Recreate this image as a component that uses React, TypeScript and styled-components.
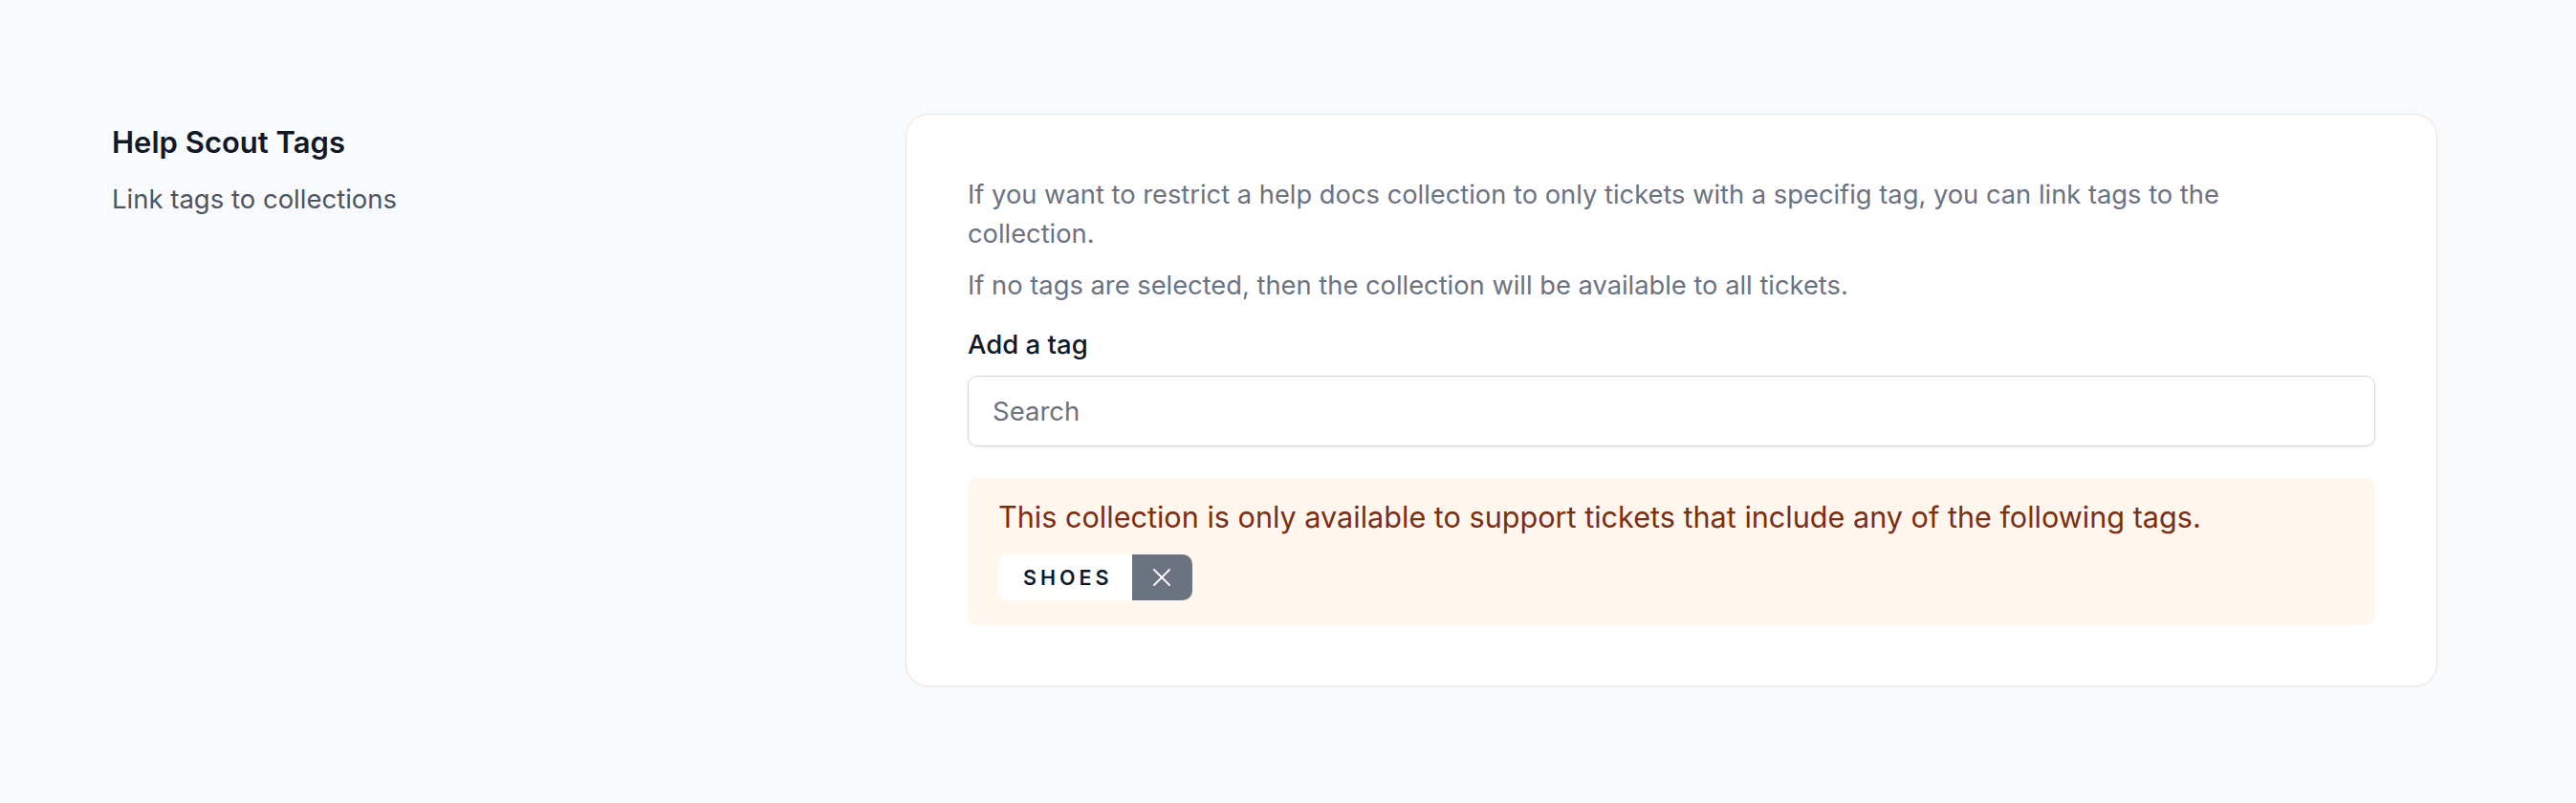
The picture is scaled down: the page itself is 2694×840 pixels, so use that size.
import React from "react";
import styled, { createGlobalStyle } from "styled-components";

const GlobalStyle = createGlobalStyle`
  html, body {
    margin: 0;
    padding: 0;
    background-color: #f9fafb;
  }

  body {
    font-family: Inter, "Noto Sans", "Liberation Sans", sans-serif;
    -webkit-font-smoothing: antialiased;
  }

  * {
    box-sizing: border-box;
  }
`;

const StyledPage = styled.div`
  display: grid;
  grid-template-columns: 784px 1602px;
  column-gap: 46px;
  align-items: start;
  min-height: 840px;
  padding: 119px 145px 0 117px;
`;

const StyledIntro = styled.div`
  padding-top: 6px;
`;

const StyledHeading = styled.h3`
  margin: 0;
  font-size: 31px;
  line-height: 47.6px;
  font-weight: 600;
  color: #111827;
`;

const StyledSubtitle = styled.p`
  margin: 15px 0 0;
  font-size: 27.5px;
  line-height: 41px;
  color: #4b5563;
`;

const StyledCard = styled.section`
  display: flex;
  flex-direction: column;
  padding: 63px 64px 63px;
  background-color: #fff;
  border: 1px solid #e5e7eb;
  border-radius: 24px;
  box-shadow: 0 1px 3px rgba(0, 0, 0, 0.04);
`;

const StyledText = styled.p`
  max-width: 1400px;
  margin: 0 0 13px;
  font-size: 27.3px;
  line-height: 41px;
  color: #6b7280;
`;

const StyledLabel = styled.label`
  display: block;
  margin-top: 8px;
  font-size: 27.5px;
  line-height: 41px;
  font-weight: 500;
  color: #111827;
`;

const StyledInput = styled.input`
  display: block;
  width: 100%;
  height: 74px;
  margin-top: 12px;
  padding: 0 25px;
  font-family: inherit;
  font-size: 27.5px;
  color: #111827;
  background-color: #fff;
  border: 1.5px solid #d1d5db;
  border-radius: 10px;
  box-shadow: 0 1px 3px rgba(0, 0, 0, 0.06);
  outline: none;

  &::placeholder {
    color: #6b7280;
  }
`;

const StyledNotice = styled.div`
  display: flex;
  flex-direction: column;
  align-items: flex-start;
  gap: 15.4px;
  margin-top: 33px;
  padding: 17px 32px 26px;
  background-color: #fff7ed;
  border-radius: 10px;
`;

const StyledNoticeText = styled.p`
  margin: 0;
  font-size: 30.6px;
  line-height: 47.6px;
  color: #7c2d12;
`;

const StyledTagList = styled.div`
  display: flex;
  flex-wrap: wrap;
  gap: 12px;
`;

const StyledTag = styled.span`
  display: inline-flex;
  align-items: stretch;
  height: 48px;
  border-radius: 10px;
  overflow: hidden;
  background-color: #fff;
`;

const StyledTagName = styled.span`
  display: flex;
  align-items: center;
  padding: 0 20px 0 26px;
  font-size: 21.5px;
  font-weight: 600;
  letter-spacing: 4px;
  text-transform: uppercase;
  color: #111827;
`;

const StyledRemove = styled.button`
  display: flex;
  align-items: center;
  justify-content: center;
  width: 63px;
  padding: 0;
  border: 0;
  background-color: #6b7280;
  color: #fff;
  cursor: pointer;
`;

const tags = ["shoes"];

const CloseIcon: React.FC = () => (
  <svg width="20" height="20" viewBox="0 0 20 20" fill="none">
    <path d="M2 2L18 18M18 2L2 18" stroke="currentColor" strokeWidth="1.8" strokeLinecap="round" />
  </svg>
);

const App: React.FC = () => {
  return (
    <>
      <GlobalStyle />
      <StyledPage>
        <StyledIntro>
          <StyledHeading>Help Scout Tags</StyledHeading>
          <StyledSubtitle>Link tags to collections</StyledSubtitle>
        </StyledIntro>

        <StyledCard>
          <StyledText>
            If you want to restrict a help docs collection to only tickets with a specifig tag, you can link
            tags to the collection.
          </StyledText>
          <StyledText>If no tags are selected, then the collection will be available to all tickets.</StyledText>

          <StyledLabel htmlFor="tag-search">Add a tag</StyledLabel>
          <StyledInput id="tag-search" type="text" placeholder="Search" />

          <StyledNotice>
            <StyledNoticeText>
              This collection is only available to support tickets that include any of the following tags.
            </StyledNoticeText>
            <StyledTagList>
              {tags.map((tag) => (
                <StyledTag key={tag}>
                  <StyledTagName>{tag}</StyledTagName>
                  <StyledRemove type="button" aria-label={`Remove ${tag}`}>
                    <CloseIcon />
                  </StyledRemove>
                </StyledTag>
              ))}
            </StyledTagList>
          </StyledNotice>
        </StyledCard>
      </StyledPage>
    </>
  );
};

export default App;
